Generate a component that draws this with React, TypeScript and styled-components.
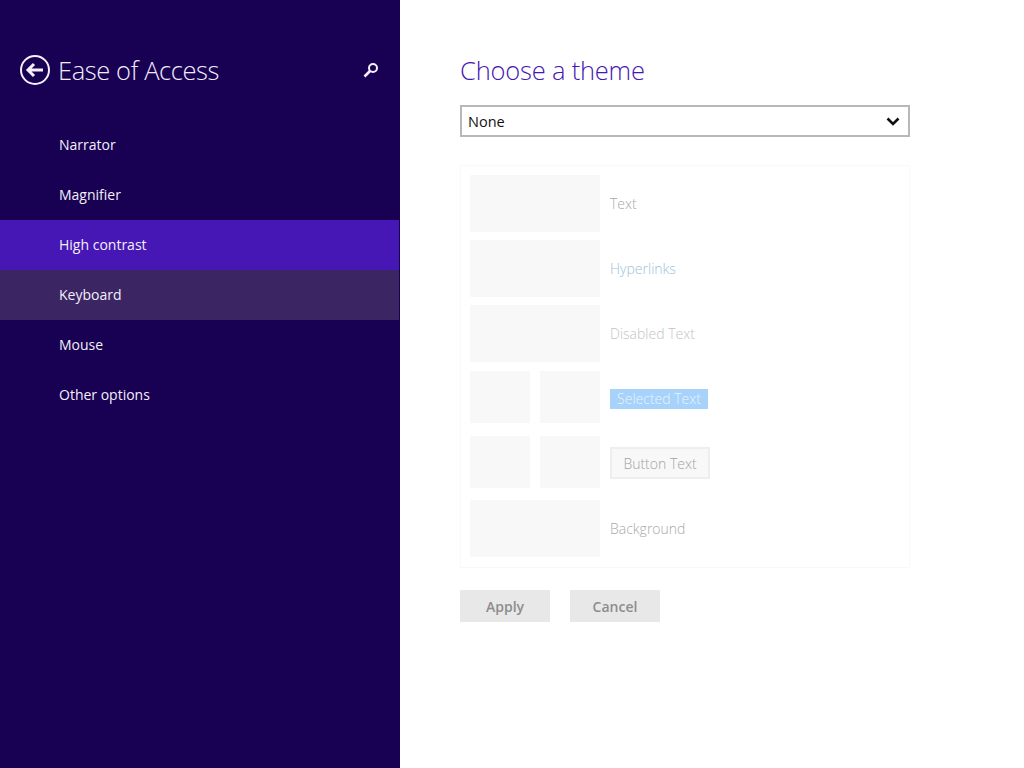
import styled, { createGlobalStyle } from 'styled-components';

const GlobalStyle = createGlobalStyle`
  html, body {
    margin: 0;
    padding: 0;
    background: #fff;
  }
  body {
    font-family: "Open Sans", "Noto Sans", "Liberation Sans", sans-serif;
  }
`;

const Page = styled.div`
  width: 1024px;
  height: 768px;
  display: flex;
  overflow: hidden;
`;

const Sidebar = styled.aside`
  width: 400px;
  flex-shrink: 0;
  background: #180052;
  display: flex;
  flex-direction: column;
`;

const SideHeader = styled.header`
  height: 120px;
  display: flex;
  align-items: center;
  padding: 20px 20px 0 20px;
  box-sizing: border-box;
`;

const BackButton = styled.svg`
  width: 30px;
  height: 30px;
  margin-right: 8px;
`;

const SideTitle = styled.h1`
  flex: 1;
  margin: 0;
  font-size: 25.5px;
  font-weight: 300;
  color: #f1ecfb;
  letter-spacing: -0.4px;
`;

const SearchIcon = styled.svg`
  width: 16px;
  height: 16px;
  margin-right: 1px;
`;

const NavList = styled.ul`
  list-style: none;
  margin: 0;
  padding: 0;
`;

const NavItem = styled.li<{ $state?: 'selected' | 'hover' }>`
  width: 399px;
  height: 50px;
  padding: 0 0 2px 59px;
  box-sizing: border-box;
  display: flex;
  align-items: center;
  font-size: 14px;
  color: #f3effa;
  background: ${(p) =>
    p.$state === 'selected' ? '#4617b4' : p.$state === 'hover' ? '#3b2563' : 'transparent'};
`;

const Content = styled.main`
  flex: 1;
  padding: 0 0 0 60px;
  display: flex;
  flex-direction: column;
  align-items: flex-start;
`;

const ContentTitle = styled.h2`
  height: 105px;
  margin: 0;
  padding-top: 51px;
  box-sizing: border-box;
  font-size: 25.5px;
  line-height: 38px;
  font-weight: 300;
  letter-spacing: -0.2px;
  color: #4617b4;
`;

const ThemeSelect = styled.div`
  width: 450px;
  height: 32px;
  box-sizing: border-box;
  border: 2px solid #b8b8b8;
  padding: 0 8px 0 6px;
  display: flex;
  align-items: center;
  justify-content: space-between;
  font-size: 14.5px;
  color: #111;
`;

const Chevron = styled.svg`
  width: 14px;
  height: 10px;
  margin-top: 2px;
`;

const Preview = styled.section`
  width: 450px;
  height: 403px;
  margin-top: 28px;
  box-sizing: border-box;
  border: 1px solid #f9f9f9;
  padding: 9px 9px;
  display: flex;
  flex-direction: column;
  gap: 8px;
`;

const PreviewRow = styled.div`
  height: 57px;
  display: flex;
  align-items: center;
  gap: 10px;
`;

const SwatchGroup = styled.div<{ $split?: boolean }>`
  width: 130px;
  height: ${(p) => (p.$split ? '52px' : '100%')};
  margin-bottom: ${(p) => (p.$split ? '3px' : '0')};
  display: flex;
  gap: 10px;
`;

const Swatch = styled.div`
  flex: 1;
  background: #f8f8f8;
`;

const RowLabel = styled.span<{ $tone?: string }>`
  font-size: 14px;
  font-weight: 300;
  color: ${(p) => p.$tone ?? '#a9a9a9'};
`;

const SelectedLabel = styled.span`
  width: 98px;
  height: 20px;
  background: #a6d2fb;
  color: #eaf4fd;
  font-size: 14px;
  font-weight: 300;
  display: flex;
  align-items: center;
  justify-content: center;
`;

const SampleButton = styled.span`
  width: 100px;
  height: 32px;
  margin-bottom: 1px;
  box-sizing: border-box;
  border: 2px solid #eeeeee;
  background: #f8f8f8;
  color: #a3a3a3;
  font-size: 14px;
  font-weight: 300;
  display: flex;
  align-items: center;
  justify-content: center;
`;

const Actions = styled.div`
  margin-top: 22px;
  display: flex;
  gap: 20px;
`;

const ActionButton = styled.button`
  width: 90px;
  height: 32px;
  border: none;
  padding: 0;
  background: #e8e8e8;
  color: #8d8d8d;
  font-family: inherit;
  font-size: 14px;
  font-weight: 600;
`;

type Row = { label: string; split?: boolean; kind?: 'link' | 'disabled' | 'selected' | 'button' };

const rows: Row[] = [
  { label: 'Text' },
  { label: 'Hyperlinks', kind: 'link' },
  { label: 'Disabled Text', kind: 'disabled' },
  { label: 'Selected Text', split: true, kind: 'selected' },
  { label: 'Button Text', split: true, kind: 'button' },
  { label: 'Background' },
];

const navItems: { label: string; state?: 'selected' | 'hover' }[] = [
  { label: 'Narrator' },
  { label: 'Magnifier' },
  { label: 'High contrast', state: 'selected' },
  { label: 'Keyboard', state: 'hover' },
  { label: 'Mouse' },
  { label: 'Other options' },
];

const renderLabel = (row: Row) => {
  if (row.kind === 'selected') return <SelectedLabel>{row.label}</SelectedLabel>;
  if (row.kind === 'button') return <SampleButton>{row.label}</SampleButton>;
  if (row.kind === 'link') return <RowLabel $tone="#9cc3da">{row.label}</RowLabel>;
  if (row.kind === 'disabled') return <RowLabel $tone="#c4c4c4">{row.label}</RowLabel>;
  return <RowLabel>{row.label}</RowLabel>;
};

const App = () => {
  return (
    <Page>
      <GlobalStyle />
      <Sidebar>
        <SideHeader>
          <BackButton viewBox="0 0 30 30" fill="none" stroke="#f4f0fb">
            <circle cx="15" cy="15" r="14" strokeWidth="2" />
            <path d="M8 15h15M14 9l-6 6 6 6" strokeWidth="3" />
          </BackButton>
          <SideTitle>Ease of Access</SideTitle>
          <SearchIcon viewBox="0 0 16 16" fill="none" stroke="#f4f0fb">
            <circle cx="10" cy="6" r="4" strokeWidth="2" />
            <path d="M7 9l-5.5 5.5" strokeWidth="2.6" />
          </SearchIcon>
        </SideHeader>
        <NavList>
          {navItems.map((item) => (
            <NavItem key={item.label} $state={item.state}>
              {item.label}
            </NavItem>
          ))}
        </NavList>
      </Sidebar>
      <Content>
        <ContentTitle>Choose a theme</ContentTitle>
        <ThemeSelect>
          None
          <Chevron viewBox="0 0 14 10" fill="none" stroke="#111">
            <path d="M1.5 1.5L7 7l5.5-5.5" strokeWidth="2.6" />
          </Chevron>
        </ThemeSelect>
        <Preview>
          {rows.map((row) => (
            <PreviewRow key={row.label}>
              <SwatchGroup $split={row.split}>
                <Swatch />
                {row.split && <Swatch />}
              </SwatchGroup>
              {renderLabel(row)}
            </PreviewRow>
          ))}
        </Preview>
        <Actions>
          <ActionButton>Apply</ActionButton>
          <ActionButton>Cancel</ActionButton>
        </Actions>
      </Content>
    </Page>
  );
};

export default App;
